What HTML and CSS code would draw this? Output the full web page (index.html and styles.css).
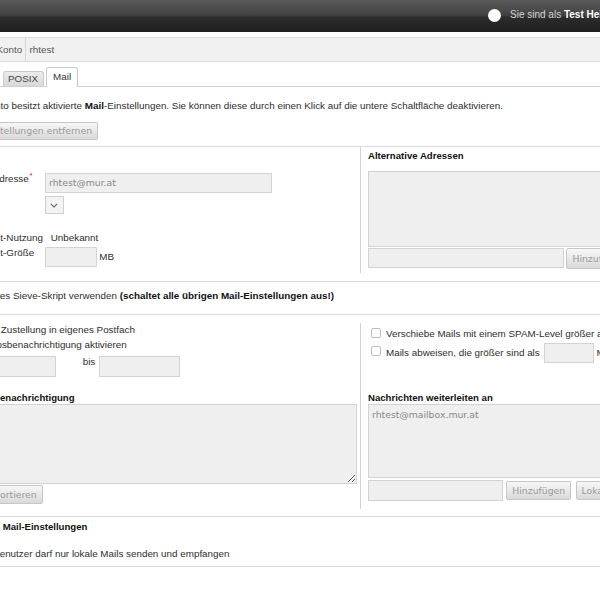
FILE: index.html
```html
<!DOCTYPE html>
<html lang="de">
<head>
<meta charset="utf-8">
<title>Mail</title>
<link rel="stylesheet" href="styles.css">
</head>
<body>
<div class="page">
  <header class="topbar">
    <span class="status-dot"></span>
    <span class="whoami">Sie sind als <b>Test Helfer</b> angemeldet</span>
  </header>

  <div class="account-bar">
    <span class="account-label">Konto</span>
    <span class="account-value">rhtest</span>
  </div>

  <nav class="tabs">
    <span class="tab">POSIX</span>
    <span class="tab tab-active">Mail</span>
  </nav>

  <div class="notice">Das Konto besitzt aktivierte <b>Mail</b>-Einstellungen. Sie können diese durch einen Klick auf die untere Schaltfläche deaktivieren.</div>
  <div class="remove-row"><button class="btn btn-remove">Mail-Einstellungen entfernen</button></div>

  <hr class="sep sep-first">

  <section class="split split-top">
    <div class="col-left">
      <div class="frow row-addr">
        <span class="lbl">Primäre Adresse<sup class="req">*</sup></span>
        <span class="input input-mail">rhtest@mur.at</span>
      </div>
      <div class="frow row-server">
        <span class="lbl">Server</span>
        <span class="select"><svg width="8" height="5" viewBox="0 0 8 5"><polyline points="0.8,0.8 4,4 7.2,0.8" fill="none" stroke="#666" stroke-width="1.1"/></svg></span>
      </div>
      <div class="frow row-usage">
        <span class="lbl">Kontingent-Nutzung</span>
        <span class="value">Unbekannt</span>
      </div>
      <div class="frow row-size">
        <span class="lbl">Kontingent-Größe</span>
        <span class="size-group"><span class="input input-size"></span><span class="unit">MB</span></span>
      </div>
    </div>
    <div class="col-right col-right-top">
      <h3 class="title">Alternative Adressen</h3>
      <div class="listbox listbox-alt"></div>
      <div class="add-row add-row-alt">
        <span class="input input-alt"></span>
        <button class="btn btn-alt">Hinzufügen</button>
      </div>
    </div>
  </section>

  <hr class="sep">

  <div class="sieve">
    <span class="cb"></span>
    <span>Eigenes Sieve-Skript verwenden <b>(schaltet alle übrigen Mail-Einstellungen aus!)</b></span>
  </div>

  <hr class="sep">

  <section class="split split-mid">
    <div class="col-left">
      <div class="cb-row cb-row-first"><span class="cb"></span><span>Keine Zustellung in eigenes Postfach</span></div>
      <div class="cb-row cb-row-second"><span class="cb"></span><span>Urlaubsbenachrichtigung aktivieren</span></div>
      <div class="dates">
        <span class="input input-date"></span>
        <span class="date-sep">bis</span>
        <span class="input input-date"></span>
      </div>
      <h3 class="title title-vacation">Urlaubsbenachrichtigung</h3>
      <textarea class="vacation-text"></textarea>
      <button class="btn btn-import">Importieren</button>
    </div>
    <div class="col-right col-right-mid">
      <div class="opt-row opt-spam"><span class="cb cb-visible"></span><span>Verschiebe Mails mit einem SPAM-Level größer als</span><span class="input input-small"></span><span class="unit">in Ordner</span></div>
      <div class="opt-row opt-size"><span class="cb cb-visible cb-raise"></span><span>Mails abweisen, die größer sind als</span><span class="input input-small"></span><span class="unit">MB</span></div>
      <h3 class="title title-forward">Nachrichten weiterleiten an</h3>
      <div class="listbox listbox-fwd"><div class="list-item">rhtest@mailbox.mur.at</div></div>
      <div class="add-row add-row-fwd">
        <span class="input input-fwd"></span>
        <button class="btn btn-fwd">Hinzufügen</button>
        <button class="btn btn-local">Lokal hinzufügen</button>
      </div>
    </div>
  </section>

  <hr class="sep">

  <h3 class="title title-adv">Erweiterte Mail-Einstellungen</h3>
  <div class="local-row"><span class="cb"></span><span>Benutzer darf nur lokale Mails senden und empfangen</span></div>

  <hr class="sep sep-after-local">
  <hr class="sep sep-bottom">
</div>
</body>
</html>
```

FILE: styles.css
```css
* { box-sizing: border-box; }

html, body {
  margin: 0;
  padding: 0;
  overflow: hidden;
  background: #fff;
}

body {
  font-family: "Liberation Sans", Arial, sans-serif;
  font-size: 9.85px;
  line-height: 12px;
  color: #2e2e2e;
}

.page {
  width: 760px;
  margin-left: -50px;
  white-space: nowrap;
}

/* top bar */
.topbar {
  height: 32px;
  display: flex;
  align-items: center;
  padding-left: 538px;
  padding-bottom: 2px;
  background: linear-gradient(#5a5a5a 0%, #424242 47%, #2c2c2c 53%, #1f1f1f 100%);
  color: #d6d6d6;
  font-size: 10px;
}
.status-dot {
  width: 13px;
  height: 13px;
  border-radius: 50%;
  background: #fff;
  flex: none;
}
.whoami { margin-left: 9px; }
.whoami b { color: #fff; }

/* account bar */
.account-bar {
  margin-top: 5px;
  height: 25px;
  display: flex;
  background: #f1f1f1;
  border-top: 1px solid #dcdcdc;
  border-bottom: 1px solid #dcdcdc;
  color: #555;
}
.account-label {
  width: 76px;
  padding-left: 46.5px;
  border-right: 1px solid #d6d6d6;
  display: flex;
  align-items: center;
}
.account-value {
  padding-left: 3.5px;
  display: flex;
  align-items: center;
}

/* tabs */
.tabs {
  margin-top: 5px;
  height: 20px;
  display: flex;
  align-items: flex-end;
  padding-left: 53px;
  border-bottom: 1px solid #cfcfcf;
}
.tab {
  height: 15px;
  padding: 0 5px 0 4px;
  border: 1px solid #c9c9c9;
  border-bottom: 0;
  border-radius: 3px 3px 0 0;
  background: linear-gradient(#ececec, #d9d9d9);
  color: #444;
  line-height: 14px;
}
.tab-active {
  height: 20px;
  margin-left: 2px;
  margin-bottom: -1px;
  padding: 3px 6px 0 6px;
  background: #fff;
  line-height: 12px;
  color: #333;
}

/* notice */
.notice {
  margin-top: 13px;
  padding-left: 12.8px;
}
.notice b { color: #111; }

.remove-row {
  margin-top: 10px;
  padding-left: 2.5px;
  height: 18px;
}

/* buttons & inputs */
.btn {
  display: inline-block;
  height: 19px;
  margin: 0;
  padding: 0 5px;
  border: 1px solid #c6c6c6;
  border-radius: 2px;
  background: linear-gradient(#f7f7f7, #d9d9d9);
  font-family: "DejaVu Sans", sans-serif;
  font-size: 9.3px;
  line-height: 17px;
  color: #9a9a9a;
  vertical-align: top;
}
.btn-remove { height: 18px; line-height: 16px; }

.input {
  display: block;
  height: 20px;
  border: 1px solid #d3d3d3;
  background: #efefef;
  font-family: "DejaVu Sans", sans-serif;
  font-size: 9.3px;
  line-height: 18px;
  color: #888;
  padding: 0 3px;
  flex: none;
}

.sep {
  border: 0;
  border-top: 1px solid #dadada;
  margin: 0;
  height: 0;
}
.sep-first { margin-top: 5.7px; }

/* split sections */
.split {
  display: flex;
  align-items: flex-start;
}
.col-left {
  width: 410px;
  padding-left: 6px;
  flex: none;
}
.col-right {
  border-left: 1px solid #d2d2d2;
  padding-left: 7px;
  flex: 1;
  min-width: 0;
}

.title {
  margin: 0;
  font-size: 9.6px;
  line-height: 12px;
  font-weight: bold;
  color: #111;
}

/* section 1 */
.split-top { padding-bottom: 8px; }
.col-right-top {
  padding-top: 3px;
  padding-bottom: 4px;
}

.frow {
  display: flex;
  align-items: flex-start;
}
.lbl {
  width: 89px;
  flex: none;
}
.req {
  color: #d00;
  font-size: 7px;
  line-height: 0;
  margin-left: 1px;
  vertical-align: 4px;
}
.row-addr { margin-top: 26.5px; }
.input-mail { width: 226.7px; }
.row-server { margin-top: 3px; }
.select {
  width: 18.5px;
  height: 18px;
  border: 1px solid #cfcfcf;
  background: #f3f3f3;
  display: flex;
  align-items: center;
  justify-content: center;
  padding-top: 1px;
}
.row-usage { margin-top: 17.5px; }
.value { padding-left: 5.7px; }
.row-size { margin-top: 3.3px; }
.size-group {
  display: flex;
  align-items: center;
}
.input-size { width: 51.7px; }
.unit { margin-left: 2.6px; }

.listbox {
  border: 1px solid #d3d3d3;
  background: #efefef;
}
.listbox-alt {
  margin-top: 9px;
  height: 76px;
  width: 290px;
}
.add-row {
  display: flex;
  align-items: center;
}
.add-row-alt {
  margin-top: 0.7px;
  height: 22px;
}
.input-alt { width: 196px; }
.btn-alt {
  height: 21.5px;
  line-height: 19.5px;
  margin-left: 2.4px;
}

/* sieve */
.sieve {
  display: flex;
  align-items: center;
  height: 12px;
  margin: 8px 0 11.6px;
  padding-left: 9.4px;
}
.sieve b { color: #111; }

.cb {
  width: 10px;
  height: 10px;
  border: 1px solid #bdbdbd;
  border-radius: 2px;
  background: #fff;
  margin-right: 5.3px;
  flex: none;
}

/* section 2 */
.split-mid { padding-bottom: 7px; }
.cb-row {
  display: flex;
  align-items: center;
  height: 12px;
  padding-left: 1.6px;
}
.cb-row-first { margin-top: 8.7px; }
.cb-row-second { margin-top: 3px; }

.dates {
  display: flex;
  align-items: flex-start;
  margin-top: 5.3px;
  padding-left: 18.4px;
}
.input-date {
  width: 81.3px;
  height: 21px;
}
.date-sep {
  width: 43.3px;
  padding-left: 27px;
}

.title-vacation {
  margin-top: 15px;
  padding-left: 2.4px;
}
.vacation-text {
  display: block;
  width: 401.3px;
  height: 80px;
  margin: 0;
  border: 1px solid #d3d3d3;
  background: #efefef;
  font-family: "DejaVu Sans", sans-serif;
  font-size: 9.3px;
}
.btn-import {
  margin-top: 1px;
  margin-left: 20.3px;
  height: 19px;
}

.col-right-mid {
  margin-top: 8.4px;
  padding-top: 4.6px;
  padding-bottom: 8.4px;
}
.opt-row {
  display: flex;
  align-items: flex-start;
  padding-left: 2.7px;
}
.opt-spam { height: 12px; }
.opt-spam .input-small { margin-top: -4px; }
.opt-size {
  margin-top: 3px;
  height: 20px;
  align-items: center;
}
.cb-raise {
  align-self: flex-start;
  margin-top: 2.7px;
}
.input-small {
  width: 50.4px;
  margin-left: 4px;
}
.opt-row .unit { margin-left: 2.3px; }

.title-forward { margin-top: 29px; }
.listbox-fwd {
  height: 74px;
  width: 300px;
  padding: 3px 3px;
}
.list-item {
  font-family: "DejaVu Sans", sans-serif;
  font-size: 9.3px;
  line-height: 14px;
  color: #888;
}
.add-row-fwd {
  margin-top: 2px;
  height: 21px;
}
.input-fwd {
  width: 135px;
  height: 21px;
}
.btn-fwd { margin-left: 3.3px; }
.btn-local { margin-left: 4.3px; }

/* advanced */
.title-adv {
  margin-top: 4px;
  padding-left: 3.6px;
}
.local-row {
  display: flex;
  align-items: center;
  height: 12px;
  margin-top: 14.6px;
  padding-left: 27.8px;
}
.sep-after-local { margin-top: 6px; }
.sep-bottom {
  margin-top: 33px;
  border-top-color: #a9a9a9;
}
```
